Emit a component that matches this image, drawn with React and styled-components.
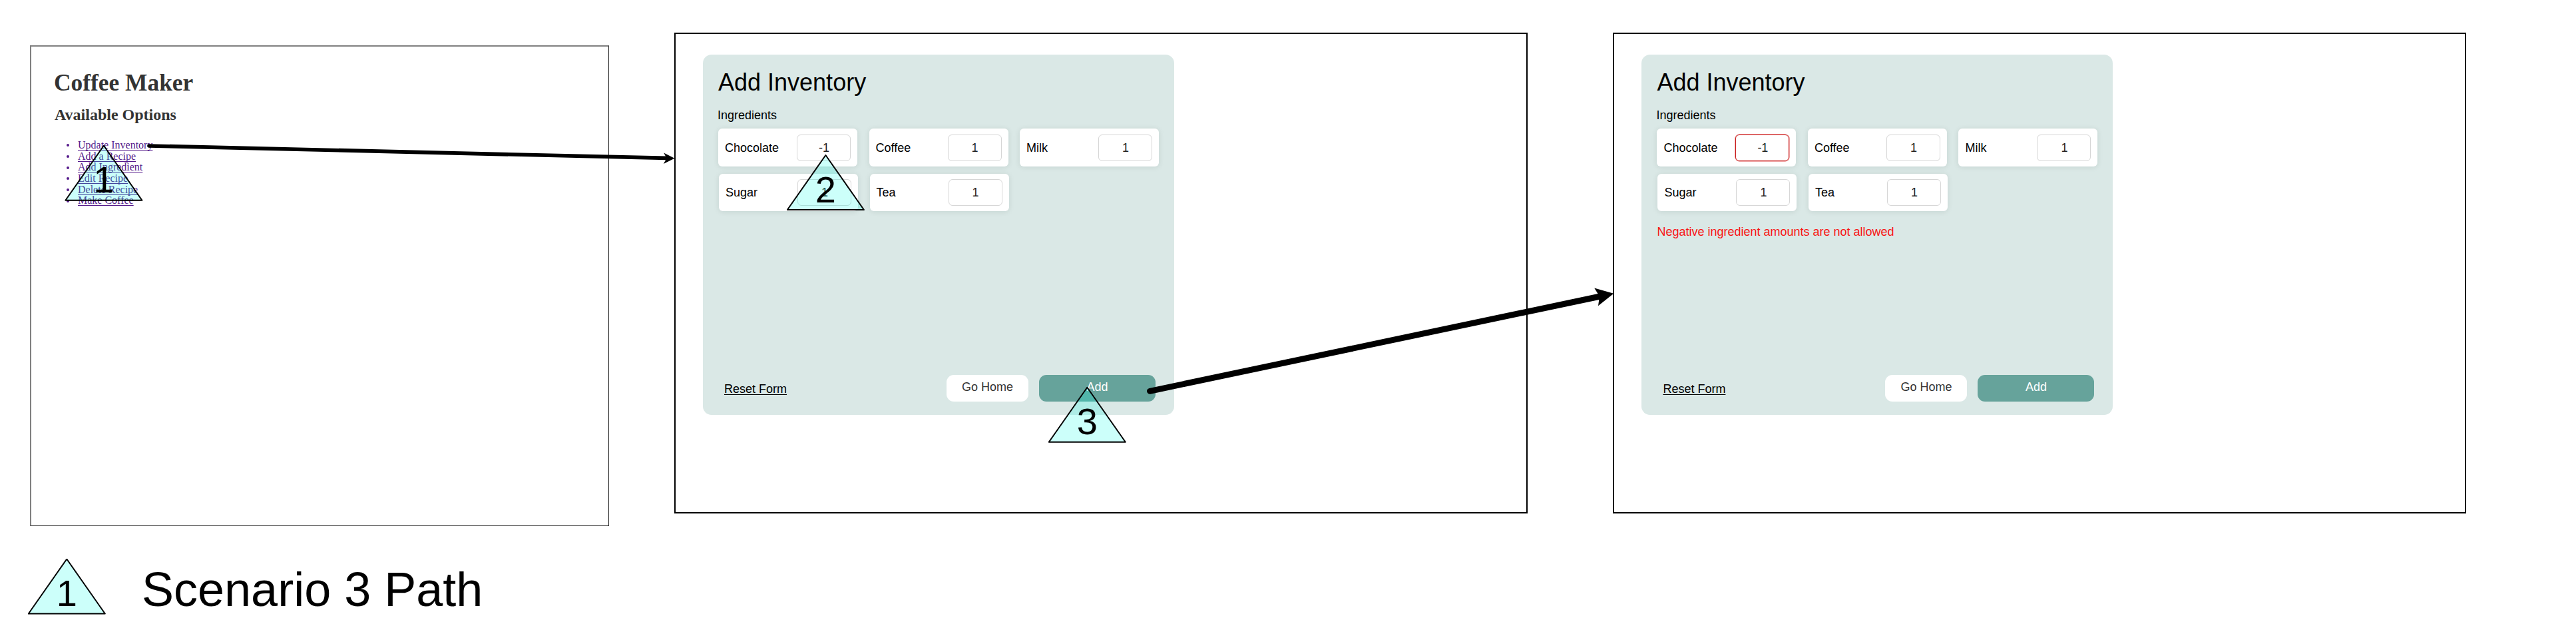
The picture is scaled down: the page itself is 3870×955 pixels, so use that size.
import React from "react";
import styled, { createGlobalStyle } from "styled-components";

const GlobalStyle = createGlobalStyle`
  html, body { margin: 0; background: #fff; }
  * { box-sizing: border-box; }
`;

const Canvas = styled.main`
  position: relative;
  width: 3870px;
  height: 955px;
  overflow: hidden;
  font-family: "Liberation Sans", Arial, sans-serif;
  color: #000;
`;

const Screens = styled.div`
  display: flex;
  align-items: flex-start;
  height: 839px;
  padding: 49px 0 0 45px;
`;

const HomeFrame = styled.section`
  width: 870px;
  height: 722px;
  margin-top: 19px;
  padding: 34px 0 0 34px;
  border: 1px solid #2b2b2b;
  border-top: 2px solid #808080;
  border-left: 2px solid #808080;
  font-family: "Liberation Serif", "Times New Roman", serif;
  color: #333;
`;

const HomeTitle = styled.h1`
  margin: 0;
  font-size: 35.4px;
  line-height: 40px;
  white-space: nowrap;
`;

const HomeSubtitle = styled.h2`
  margin: 14px 0 0 1px;
  font-size: 24px;
  line-height: 28px;
  white-space: nowrap;
`;

const OptionList = styled.ul`
  margin: 24px 0 0;
  padding: 0 0 0 36px;
  list-style: none;
`;

const Option = styled.li`
  display: flex;
  align-items: center;
  height: 16.67px;
  font-size: 16px;
  line-height: 16.67px;
  color: #551a8b;
  white-space: nowrap;

  &::before {
    content: "";
    width: 4px;
    height: 4px;
    margin: 0 13px 0 -17px;
    border-radius: 50%;
    background: #551a8b;
  }
`;

const OptionLink = styled.a`
  text-decoration: underline;
  text-decoration-thickness: 1px;
  text-underline-offset: 2px;
  text-decoration-skip-ink: none;
`;

const InventoryFrame = styled.section`
  width: 1282px;
  height: 722px;
  margin-left: ${(p) => p.$gap}px;
  padding: 31px 0 0 41px;
  border: 2px solid #000;
`;

const Panel = styled.div`
  display: flex;
  flex-direction: column;
  width: 708px;
  height: 541px;
  padding: 22px 23px 20px;
  border-radius: 13px;
  background: #dae8e6;
  font-size: 18px;
  line-height: 20px;
`;

const PanelTitle = styled.h2`
  margin: 0;
  font-size: 36px;
  font-weight: 400;
  line-height: 40px;
`;

const FieldLabel = styled.div`
  margin: 19px 0 10.33px -1px;
`;

const CardRow = styled.div`
  display: flex;
  gap: 17.5px;
  margin: 0 0 10.67px ${(p) => (p.$shift ? 1 : 0)}px;
`;

const Card = styled.div`
  display: flex;
  align-items: center;
  justify-content: space-between;
  width: 209px;
  height: 56.67px;
  padding: 0 10px;
  border-radius: 6px;
  background: #fff;
  box-shadow: 0 1px 8px rgba(0, 40, 30, 0.1);
`;

const Amount = styled.div`
  display: flex;
  align-items: center;
  justify-content: center;
  width: 81px;
  height: 40px;
  padding: 1px 0 0 1px;
  border: 1px solid ${(p) => (p.$invalid ? "#c81e1e" : "#d6d6d6")};
  border-radius: 6px;
  box-shadow: ${(p) => (p.$invalid ? "0 0 0 0.5px #d44" : "none")};
  color: #222;
`;

const ErrorText = styled.div`
  margin-top: 10px;
  color: #f81414;
`;

const Footer = styled.div`
  display: flex;
  align-items: center;
  margin-top: auto;
  padding: 0 5px 0 9px;
`;

const ResetLink = styled.a`
  margin: 2px auto 0 0;
  text-decoration: underline;
  text-decoration-thickness: 1px;
  text-underline-offset: 2px;
`;

const Button = styled.button`
  width: ${(p) => (p.$primary ? 175 : 123)}px;
  height: 40px;
  margin-left: ${(p) => (p.$primary ? 16 : 0)}px;
  padding: 0 0 4px;
  border: 0;
  border-radius: 11px;
  background: ${(p) => (p.$primary ? "#66a39b" : "#fff")};
  color: ${(p) => (p.$primary ? "#fff" : "#333")};
  font: 18px/20px "Liberation Sans", Arial, sans-serif;
`;

const Legend = styled.footer`
  display: flex;
  align-items: flex-start;
  padding-left: 42px;
  gap: 53px;
`;

const LegendText = styled.div`
  padding-top: 5px;
  font-size: 72px;
  line-height: 82px;
  white-space: nowrap;
`;

const Overlay = styled.svg`
  position: absolute;
  inset: 0;
  pointer-events: none;
`;

const LegendIcon = styled.svg`
  display: block;
  width: 118px;
  height: 85px;
`;

const MarkerNumber = styled.text`
  font-family: "Liberation Sans", Arial, sans-serif;
  font-size: 56px;
  text-anchor: middle;
`;

function Marker({ x, y, children }) {
  return (
    <g transform={`translate(${x} ${y})`}>
      <path
        d="M0 0L57.5 82H-57.5Z"
        fill="rgba(0,255,230,0.2)"
        stroke="#000"
        strokeWidth="2"
        strokeLinejoin="round"
      />
      <MarkerNumber x="0" y="70.5">{children}</MarkerNumber>
    </g>
  );
}

const options = [
  "Update Inventory",
  "Add a Recipe",
  "Add Ingredient",
  "Edit Recipe",
  "Delete Recipe",
  "Make Coffee",
];

const rows = [
  [["Chocolate", "-1"], ["Coffee", "1"], ["Milk", "1"]],
  [["Sugar", "1"], ["Tea", "1"]],
];

function InventoryScreen({ gap, error }) {
  return (
    <InventoryFrame $gap={gap}>
      <Panel>
        <PanelTitle>Add Inventory</PanelTitle>
        <FieldLabel>Ingredients</FieldLabel>
        {rows.map((row, i) => (
          <CardRow key={i} $shift={i === 1}>
            {row.map(([name, amount]) => (
              <Card key={name}>
                {name}
                <Amount $invalid={Boolean(error) && amount === "-1"}>{amount}</Amount>
              </Card>
            ))}
          </CardRow>
        ))}
        {error && <ErrorText>{error}</ErrorText>}
        <Footer>
          <ResetLink>Reset Form</ResetLink>
          <Button>Go Home</Button>
          <Button $primary>Add</Button>
        </Footer>
      </Panel>
    </InventoryFrame>
  );
}

export default function App() {
  return (
    <>
      <GlobalStyle />
      <Canvas>
        <Screens>
          <HomeFrame>
            <HomeTitle>Coffee Maker</HomeTitle>
            <HomeSubtitle>Available Options</HomeSubtitle>
            <OptionList>
              {options.map((o) => (
                <Option key={o}>
                  <OptionLink>{o}</OptionLink>
                </Option>
              ))}
            </OptionList>
          </HomeFrame>
          <InventoryScreen gap={98} />
          <InventoryScreen gap={128.4} error="Negative ingredient amounts are not allowed" />
        </Screens>
        <Legend>
          <LegendIcon viewBox="0 0 118 85">
            <Marker x={58.3} y={0.5}>1</Marker>
          </LegendIcon>
          <LegendText>Scenario 3 Path</LegendText>
        </Legend>
        <Overlay width="3870" height="955" viewBox="0 0 3870 955">
          <Marker x={155.9} y={218.7}>1</Marker>
          <Marker x={1240.4} y={233}>2</Marker>
          <Marker x={1633.3} y={581.8}>3</Marker>
          <path d="M224 219L1001 237.4" stroke="#000" strokeWidth="5.7" strokeLinecap="round" />
          <path d="M1013.5 237.7L997.2 229.4L1001.5 237.4L996.9 246Z" />
          <path d="M1727.5 587.3L2404 445" stroke="#000" strokeWidth="9" strokeLinecap="round" />
          <path d="M2424.3 440.7L2395.2 432.5L2403 445L2401 459.2Z" />
        </Overlay>
      </Canvas>
    </>
  );
}
